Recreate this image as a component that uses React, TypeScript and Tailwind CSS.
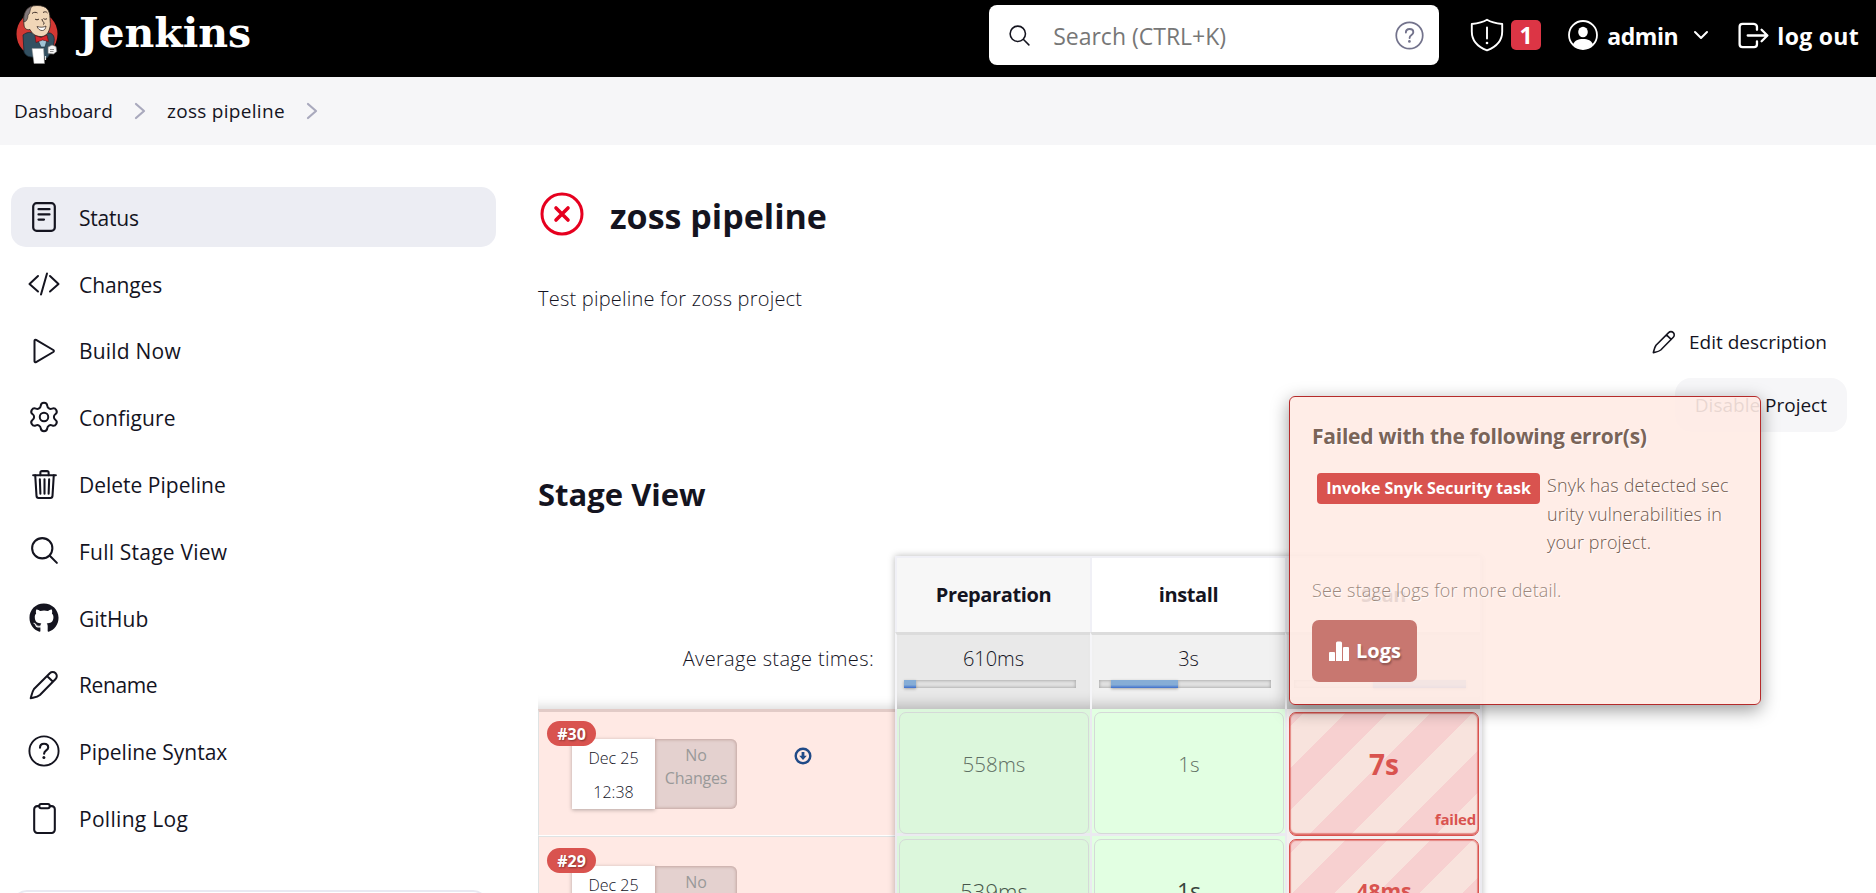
import type { ReactNode } from "react";
import { Settings } from "lucide-react";
import { IoClipboardOutline, IoLogOutOutline, IoSearchOutline, IoTrashOutline } from "react-icons/io5";
import { FaGithub } from "react-icons/fa";

function JenkinsHead() {
  return (
    <svg width="60" height="70" viewBox="0 0 60 70" className="block">
      <ellipse cx="27" cy="34" rx="20.5" ry="22" fill="#d33833" />
      <path d="M13 35c4-3 7-3 9-2l18 0c3 1 5 4 4 9l-1 8-6 8-15-1c-5 0-7-3-8-5z" fill="#335061" stroke="#1b2a35" strokeWidth=".8" />
      <path d="M14 25C12 13 17 5.500 27 5.500c10 0 13 5 13 13 0 4 1 6-.5 10.500C38 34 35 37 30 36.500c-5-.3-8-3-10-7-4 1-6-2-6-4.500z" fill="#f0d6b7" stroke="#2b2320" strokeWidth=".8" />
      <path d="M14 22c-1-8 2-14 8-16-3 4-1 7-4 9 0 3-1 5-2 6z" fill="#81787a" stroke="#2b2320" strokeWidth=".6" />
      <path d="M22 13.500c1.500-1.500 4-1.500 5.500-.5M33 12.500c1.500-1 3.500-1 4.500.5M25 19c1 1 3 1 4 0M33.500 18.500c1 1 2.500 1 3.500 0M32 19c0 3 4 4 1 5.500" fill="none" stroke="#3a2b25" strokeWidth="1" />
      <path d="M27 26.500c3 1 7 1 9-.5-.5 3.500-2 4.500-4 4.500s-4-1.500-5-4z" fill="#fff" stroke="#3a2b25" strokeWidth=".8" />
      <path d="M27 38l4 9h4l2.500-9z" fill="#9fc3d6" stroke="#1b2a35" strokeWidth=".6" />
      <path d="M25 35.500l6 2 6-2.500 1.500 6.500-6-1.500-6.500 2.500z" fill="#d9262c" stroke="#5a1012" strokeWidth=".6" />
      <path d="M22 48.500h11.500l1 15H24z" fill="#fff" stroke="#999" strokeWidth=".5" />
      <path d="M38 47l4-2 4 1.500.8 5-3.300 2.500-5.500-.500z" fill="#f6f6f6" stroke="#777" strokeWidth=".7" />
      <path d="M40 49.500h4M40 51.500h3.500" stroke="#666" strokeWidth=".7" />
      <path d="M35.500 56v4" stroke="#ddd" strokeWidth="1.200" />
    </svg>
  );
}

const strokeProps = { fill: "none", stroke: "currentColor", strokeLinecap: "round", strokeLinejoin: "round" } as const;

function Help({ size }: { size: number }) {
  return (
    <svg width={size} height={size} viewBox="0 0 32 32" {...strokeProps}>
      <circle cx="16" cy="16" r="14.600" strokeWidth="1.900" />
      <path d="M12 12.800c0-2.500 1.700-4 4.100-4s4.100 1.500 4.100 3.600c0 3.100-4.100 3-4.100 6.300" strokeWidth="2.100" />
      <circle cx="15.900" cy="22.600" r="1.500" fill="currentColor" stroke="none" />
    </svg>
  );
}

function Pencil({ size }: { size: number }) {
  return (
    <svg width={size} height={size} viewBox="0 0 30 30" {...strokeProps} strokeWidth="2">
      <path d="M1.700 28.300c1-3.600 1.400-6.600 3.300-9.300L20.800 3.200a4 4 0 0 1 5.800 5.800L10.900 25c-2.600 2.200-5.600 2.400-9.200 3.300zM18 6l6 5.800" />
    </svg>
  );
}

function Chevron() {
  return (
    <svg width="12" height="18" viewBox="0 0 12 18" {...strokeProps} strokeWidth="2.200" className="text-[#a9a9bd]">
      <path d="M2 2l8 7-8 7" />
    </svg>
  );
}

const tasks: { label: string; icon: ReactNode; track: string; active?: boolean }[] = [
  {
    label: "Status",
    active: true,
    track: "tracking-[-0.2px]",
    icon: (
      <svg width="24" height="30" viewBox="0 0 24 30" {...strokeProps} strokeWidth="2.200">
        <rect x="1.200" y="1.200" width="21.600" height="27.600" rx="3.400" />
        <path d="M6.500 7.200h11M6.500 12.400h11M6.500 17.600h5.500" />
      </svg>
    ),
  },
  {
    label: "Changes",
    track: "tracking-[-0.1px]",
    icon: (
      <svg width="32" height="24" viewBox="0 0 32 24" {...strokeProps} strokeWidth="2">
        <path d="M10 4L1.500 12l8.500 7.500M22 4l8.500 8-8.500 7.500M19 1.500L13 22.500" />
      </svg>
    ),
  },
  {
    label: "Build Now",
    track: "tracking-[0.2px]",
    icon: (
      <svg width="24" height="26" viewBox="0 0 24 26" {...strokeProps} strokeWidth="2">
        <path d="M2.500 2.800v20.400c0 1 .8 1.400 1.600 1L21.300 14c.8-.5.8-1.500 0-2L4.100 1.800c-.8-.4-1.600 0-1.600 1z" />
      </svg>
    ),
  },
  { label: "Configure", track: "tracking-[0.1px]", icon: <Settings size={34} strokeWidth={1.4} /> },
  { label: "Delete Pipeline", track: "tracking-normal", icon: <IoTrashOutline size={33} /> },
  { label: "Full Stage View", track: "tracking-[0.22px]", icon: <IoSearchOutline size={33} /> },
  { label: "GitHub", track: "tracking-normal", icon: <FaGithub size={30} /> },
  { label: "Rename", track: "tracking-[-0.4px]", icon: <Pencil size={30} /> },
  { label: "Pipeline Syntax", track: "tracking-normal", icon: <Help size={32} /> },
  { label: "Polling Log", track: "tracking-[0.3px]", icon: <IoClipboardOutline size={33} /> },
];

function Header() {
  return (
    <header className="flex h-[77px] items-start bg-black pl-[10px] text-white">
      <JenkinsHead />
      <span className="ml-[9px] h-[70px] font-['DejaVu_Serif',serif] text-[41px] leading-[67px] font-bold">Jenkins</span>
      <div className="mt-[5px] ml-auto flex h-[60px] w-[450px] items-center rounded-[8px] bg-white pr-[15px] pl-[18px] text-[#14141f]">
        <IoSearchOutline size={25} />
        <span className="ml-[21px] pt-[2px] text-[23px] text-[#777]">Search (CTRL+K)</span>
        <span className="ml-auto text-[#73738c]">
          <Help size={29} />
        </span>
      </div>
      <div className="mt-[5px] ml-[31px] flex h-[60px] items-center pr-[17px] text-[23px] font-bold">
        <svg width="34" height="34" viewBox="0 0 34 34" {...strokeProps} strokeWidth="1.900">
          <path d="M17 1.800C12.500 4.600 7 5.500 1.800 6v7.500C1.800 22 7.500 28.800 17 32.400 26.500 28.800 32.200 22 32.200 13.500V6C27 5.500 21.500 4.600 17 1.800zM17 9.500v11" />
          <circle cx="17" cy="25" r="1.300" fill="currentColor" stroke="none" />
        </svg>
        <span className="ml-[7px] flex h-[30px] w-[30px] items-center justify-center rounded-[5px] bg-[#dc3545] pt-px text-[23px]">1</span>
        <svg width="30" height="30" viewBox="0 0 30 30" className="ml-[27px]">
          <circle cx="15" cy="15" r="14" fill="none" stroke="currentColor" strokeWidth="1.800" />
          <ellipse cx="15" cy="12" rx="4.800" ry="5.300" fill="currentColor" />
          <path d="M5 24.500c1.500-3.800 5-5.500 10-5.500s8.500 1.700 10 5.500a14 14 0 0 1-20 0z" fill="currentColor" />
        </svg>
        <span className="ml-[9px] pt-[2px] tracking-[-0.4px]">admin</span>
        <svg width="16" height="10" viewBox="0 0 16 10" {...strokeProps} strokeWidth="2" className="ml-[15px]">
          <path d="M2 2l6 6 6-6" />
        </svg>
        <span className="ml-[26px]">
          <IoLogOutOutline size={37} />
        </span>
        <span className="ml-[5px] pt-[2px] tracking-[0.3px]">log out</span>
      </div>
    </header>
  );
}

function Bar({ lead, fill }: { lead: string; fill: string }) {
  return (
    <div className="mt-[7px] ml-[7px] flex h-[8px] w-[172px] bg-[#e2e2e2] shadow-[inset_0_0_3px_1px_rgba(0,0,0,0.22)]">
      <div className={lead} />
      <div className={`bg-linear-to-b from-[#86add6] from-60% to-[#3f6ecb] shadow-[0_1px_3px_rgba(0,0,0,0.3)] ${fill}`} />
    </div>
  );
}

const stages = [
  { name: "Preparation", avg: "610ms", head: "bg-[#f7f7f7]", mid: "bg-[#e9e9e9]", lead: "w-0", fill: "w-[12px]" },
  { name: "install", avg: "3s", head: "bg-white", mid: "bg-[#f1f1f1]", lead: "w-[12px]", fill: "w-[67px]" },
  { name: "Scan", avg: "4s", head: "bg-[#f7f7f7]", mid: "bg-[#e9e9e9]", lead: "w-[79px]", fill: "w-[93px]" },
];

function BuildInfo({ id, time, edge, artifact }: { id: string; time: string; edge: string; artifact?: boolean }) {
  return (
    <div className={`h-[127px] border-b border-b-white border-l border-l-[#dfe3e3] bg-[#ffe9e4] ${edge}`}>
      <div className="relative flex pl-[33px]">
        <span className="absolute top-[-18px] left-[8px] z-10 flex h-[25px] w-[49px] items-center justify-center rounded-full bg-[#d9534f] text-[16px] font-bold text-white [text-shadow:1px_1px_2px_rgba(0,0,0,0.4)]">
          {id}
        </span>
        <div className="flex h-[70px] w-[83px] flex-col items-center bg-white pt-[2px] text-[16px] leading-[34px] font-light shadow-[0_1px_4px_rgba(0,0,0,0.3)]">
          <span>Dec 25</span>
          <span>{time}</span>
        </div>
        <div className="flex h-[70px] w-[82px] flex-col items-center rounded-r-[6px] bg-[#e4d1cf] pt-[5px] text-[16px] leading-[23px] tracking-[-0.2px] text-[#999] shadow-[inset_0_0_3px_1px_rgba(120,60,50,0.28)]">
          <span>No</span>
          <span>Changes</span>
        </div>
        {artifact && (
          <svg width="18" height="18" viewBox="0 0 18 18" className="mt-[8px] ml-[57px] text-[#204a87]">
            <circle cx="9" cy="9" r="7.300" fill="none" stroke="currentColor" strokeWidth="2.400" />
            <path d="M7.600 5h2.800v3.800h2.400L9 13 5.200 8.800h2.400z" fill="currentColor" />
          </svg>
        )}
      </div>
    </div>
  );
}

function OkCell({ value, tone, text }: { value: string; tone: string; text: string }) {
  return (
    <div className={`h-[127px] border-b-[3px] border-l-2 border-[#ebeaf0] pt-[3px] pr-px pl-[2px] ${tone}`}>
      <div className={`flex h-[122px] justify-center rounded-[7px] border border-[#d5d9d8] pt-[36px] leading-[30px] ${text}`}>
        <span>{value}</span>
      </div>
    </div>
  );
}

function FailedCell({ value, text }: { value: string; text: string }) {
  return (
    <div className="h-[127px] border-l-2 border-[#ebeaf0] bg-[#f4efef] pt-[3px] pr-px pl-[2px]">
      <div
        className={`relative flex h-[124px] justify-center rounded-[7px] border border-[#d9534f] bg-[repeating-linear-gradient(-45deg,#f8e3dd_0_30px,#f7d0d0_30px_60px)] pt-[33px] leading-[36px] font-bold text-[#d9534f] shadow-[inset_0_-2px_1px_rgba(217,83,79,0.55),inset_0_0_1px_1px_rgba(217,83,79,0.6)] ${text}`}
      >
        <span>{value}</span>
        <span className="absolute right-[2px] bottom-[4px] text-[15px] leading-[24px] tracking-[-0.2px]">failed</span>
      </div>
    </div>
  );
}

function StageTable() {
  return (
    <div className="mt-[41px] flex w-[944px]">
      <div className="w-[357px]">
        <div className="flex h-[153px] items-end justify-end pr-[21px] pb-[36px] text-[20px] leading-[28px] font-light tracking-[0.35px] shadow-[inset_0_-14px_12px_-12px_rgba(0,0,0,0.16)]">
          <span>Average stage times:</span>
        </div>
        <BuildInfo id="#30" time="12:38" edge="border-t-[3px] border-t-[#e2cbc7] pt-[27px]" artifact />
        <BuildInfo id="#29" time="12:36" edge="border-t border-t-[#dfe3e3] pt-[29px]" />
      </div>
      <div className="grid grid-cols-3 border-r-2 border-[#ebeaf0] shadow-[0_0_7px_rgba(0,0,0,0.28)]">
        {stages.map((s) => (
          <div key={s.name} className="w-[195px]">
            <div className={`flex h-[76px] items-center justify-center border-t-2 border-l-2 border-[#f0f0f6] text-[20px] font-bold tracking-[-0.4px] ${s.head}`}>
              <span>{s.name}</span>
            </div>
            <div
              className={`h-[77px] border-t-[3px] border-l-2 border-t-[#dcdcdc] border-l-[#f5f5f8] pt-[10px] shadow-[inset_0_-16px_14px_-12px_rgba(0,0,0,0.22)] ${s.mid}`}
            >
              <div className="flex h-[28px] items-center justify-center text-[20px] font-light">
                <span>{s.avg}</span>
              </div>
              <Bar lead={s.lead} fill={s.fill} />
            </div>
          </div>
        ))}
        <OkCell value="558ms" tone="bg-[#dcf7dc]" text="text-[20.5px] font-light text-[#5f6f63]" />
        <OkCell value="1s" tone="bg-[#e2ffe2]" text="text-[20.5px] font-light text-[#5f6f63]" />
        <FailedCell value="7s" text="text-[28px]" />
        <OkCell value="539ms" tone="bg-[#dcf7dc]" text="text-[22px] font-light text-[#46564a]" />
        <OkCell value="1s" tone="bg-[#e2ffe2]" text="text-[23px] text-[#3a443d]" />
        <FailedCell value="48ms" text="text-[21px]" />
      </div>
    </div>
  );
}

function ErrorPopover() {
  return (
    <div className="absolute top-[251px] left-[793px] h-[309px] w-[472px] rounded-[6px] border border-[#b52b2b] bg-[#ffebe4]/90 pt-[23px] pl-[22px] shadow-[0_5px_18px_rgba(0,0,0,0.4)] [text-shadow:1px_1px_1px_#fff]">
      <h3 className="flex h-[34px] items-center text-[21px] font-bold tracking-[-0.24px] text-[#7a6458]">
        <span>Failed with the following error(s)</span>
      </h3>
      <div className="mt-[17px] flex h-[100px] pl-[5px]">
        <span className="mt-[2px] flex h-[31px] w-[223px] items-center justify-center rounded-[4px] bg-[#d9534f] pb-px text-[16px] font-bold text-white [text-shadow:none]">
          <span>Invoke Snyk Security task</span>
        </span>
        <div className="ml-[7px] flex flex-col text-[18px] leading-[28.500px] font-light tracking-[0.15px] text-[#6f5a4f]">
          <span>Snyk has detected sec</span>
          <span>urity vulnerabilities in</span>
          <span>your project.</span>
        </div>
      </div>
      <div className="mt-[4px] flex h-[30px] items-center text-[18px] font-light tracking-[0.2px] text-[#9c887d]">
        <span>See stage logs for more detail.</span>
      </div>
      <button className="mt-[15px] flex h-[62px] w-[105px] items-center rounded-[7px] bg-[#c87770] pl-[17px] text-[20px] font-bold text-white [text-shadow:1px_2px_2px_rgba(0,0,0,0.3)]">
        <svg width="21" height="20" viewBox="0 0 21 20" fill="currentColor">
          <path d="M0 12a1 1 0 0 1 1-1h4a1 1 0 0 1 1 1v8H0zM7 2a1.500 1.500 0 0 1 1.500-1.500h3A1.500 1.500 0 0 1 13 2v18H7zM14 7a1 1 0 0 1 1-1h4a1 1 0 0 1 1 1v13h-6z" />
        </svg>
        <span className="ml-[6px]">Logs</span>
      </button>
    </div>
  );
}

export default function App() {
  return (
    <div className="h-[893px] w-[1876px] overflow-hidden bg-white font-['Open_Sans','Noto_Sans',sans-serif] text-[#14141f]">
      <Header />
      <nav className="flex h-[68px] items-center bg-[#f6f6f8] pl-[14px] text-[19px]">
        <span className="pt-px tracking-[0.1px]">Dashboard</span>
        <span className="ml-[21px]">
          <Chevron />
        </span>
        <span className="ml-[21px] pt-px tracking-[0.3px]">zoss pipeline</span>
        <span className="ml-[21px]">
          <Chevron />
        </span>
      </nav>
      <div className="flex">
        <aside className="w-[496px] pt-[42px] pl-[11px]">
          <ul className="flex flex-col gap-[6.800px]">
            {tasks.map((t) => (
              <li key={t.label} className={`flex h-[60px] items-center rounded-[15px] text-[21px] ${t.active ? "bg-[#ecedf3]" : ""}`}>
                <span className="ml-[16px] flex w-[34px] justify-center">{t.icon}</span>
                <span className={`ml-[18px] pt-[3px] ${t.track}`}>{t.label}</span>
              </li>
            ))}
          </ul>
          <div className="mt-[42px] ml-px h-[60px] w-[476px] rounded-[15px] border-2 border-[#e9e9f2]" />
        </aside>
        <main className="relative flex-1 pt-[42px] pl-[42px]">
          <div className="flex h-[54px] items-center">
            <svg width="48" height="48" viewBox="0 0 48 48" {...strokeProps} className="text-[#e6001f]">
              <circle cx="24" cy="24" r="20" strokeWidth="3" />
              <path d="M18 18l12 12M30 18L18 30" strokeWidth="3.600" />
            </svg>
            <h1 className="ml-[24px] pt-[4px] text-[34px] font-bold">zoss pipeline</h1>
          </div>
          <p className="mt-[44px] flex h-[28px] items-center text-[20px] font-light tracking-[0.22px]">Test pipeline for zoss project</p>
          <div className="mt-[2px] flex flex-col items-end gap-[9px] pr-[29px] text-[19px]">
            <div className="flex h-[54px] items-center pr-[20px]">
              <Pencil size={24} />
              <span className="ml-[13px]">Edit description</span>
            </div>
            <div className="flex h-[54px] items-center rounded-[16px] bg-[#f6f6f8] px-[20px]">Disable Project</div>
          </div>
          <h2 className="mt-[42px] flex h-[41px] items-center text-[31px] font-bold">Stage View</h2>
          <StageTable />
          <ErrorPopover />
        </main>
      </div>
    </div>
  );
}
